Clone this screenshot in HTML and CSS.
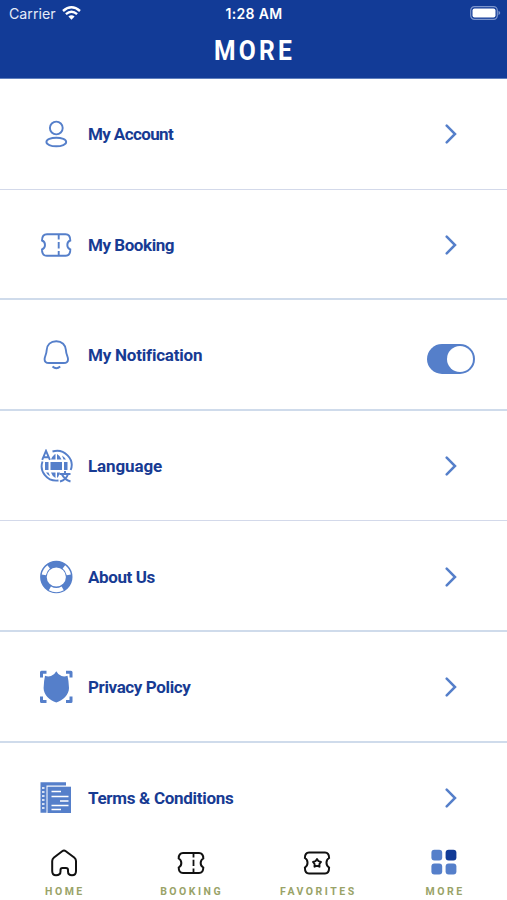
FILE: index.html
```html
<!DOCTYPE html>
<html lang="en">
<head>
<meta charset="utf-8">
<title>More</title>
<link rel="stylesheet" href="styles.css">
</head>
<body>
<div class="app">
  <header class="header">
    <div class="status">
      <div class="carrier"><span>Carrier</span>
        <svg width="19" height="14" viewBox="0 0 19 14" fill="none" stroke="#fff" stroke-width="2.4"><path d="M1 5Q9.500-2.500 18 5M3.900 8.100Q9.500 3.200 15.100 8.100"/><path d="M6.400 10.500Q9.500 7.800 12.600 10.500L9.500 13.700Z" fill="#fff" stroke="none"/></svg>
      </div>
      <time class="time">1:28 AM</time>
      <svg class="battery" width="31" height="14" viewBox="0 0 31 14"><rect x=".7" y=".7" width="26.600" height="12.600" rx="3.700" fill="none" stroke="#7c95cd" stroke-width="1.200"/><rect x="2.500" y="2.500" width="23" height="9" rx="2" fill="#fff"/><path d="M28.500 4.800Q32 7 28.500 9.200Z" fill="#7c95cd"/></svg>
    </div>
    <h1 class="title">MORE</h1>
  </header>
  <main class="list">
    <div class="row thin">
      <svg class="icon" viewBox="0 0 34 34" fill="none" stroke="#557fca" stroke-width="1.900"><circle cx="17.300" cy="11" r="6.400"/><ellipse cx="17.300" cy="25" rx="9.900" ry="4.300"/></svg>
      <span class="label account">My Account</span>
      <svg class="chevron" viewBox="0 0 12 20"><path d="M1.700 1.700L10 10 1.700 18.300"/></svg>
    </div>
    <div class="row">
      <svg class="icon" viewBox="0 0 34 34" fill="none" stroke="#557fca" stroke-width="1.900"><path d="M8 6.200H26.500Q31.300 6.200 31.300 12.500C27.300 14 27.300 20 31.300 21.500Q31.300 27.800 26.500 27.800H8Q3 27.800 3 21.500C7 20 7 14 3 12.500Q3 6.200 8 6.200Z"/><path d="M19.700 7V11.500M19.700 14V20.500M19.700 23V27.500"/></svg>
      <span class="label booking">My Booking</span>
      <svg class="chevron" viewBox="0 0 12 20"><path d="M1.700 1.700L10 10 1.700 18.300"/></svg>
    </div>
    <div class="row">
      <svg class="icon" viewBox="0 0 34 34" fill="none" stroke="#557fca" stroke-width="1.900"><path d="M17.300 3.200C11.500 3.200 8 7 7.700 12C7.400 17 5.600 18 5.600 21.500Q5.600 25 10 25H24.700Q29 25 29 21.500C29 18 27.200 17 26.900 12C26.600 7 23 3.200 17.300 3.200Z"/><path d="M13.500 28.500Q17.300 32 21.200 28.500"/></svg>
      <span class="label notification">My Notification</span>
      <span class="toggle" role="switch" aria-checked="true"></span>
    </div>
    <div class="row thin">
      <svg class="icon" viewBox="0 0 34 34" fill="none" stroke="#557fca" stroke-width="1.900"><path d="M13.500 2.500C25-1 36 10 31.700 21M3.500 12.500C0 22 8 33 19.500 31.500"/><path d="M3.200 10.800L7 1.800 10.900 10.800M4.500 8.300H9.500"/><g fill="#557fca" stroke="none"><path d="M15.500 5.500L16.500 5V10.500H12Q13.500 7 15.500 5.500ZM18 5Q21 6.500 22.500 10.500H18ZM12 23.500H16.500V29Q13 27 12 23.500ZM18 23.500H21L20 26Q19.500 28 18 29Z"/><path d="M6 13H9.500V21H6ZM11.500 13H23V21H11.500ZM25 13H28.500V21H25ZM7 23.500H9.500L11 27Q8.500 26 7 23.500ZM23 6.500Q25.500 8 27 10.500H24.500Z"/></g><path d="M20.500 25H31.500M26 22V24.700M28.800 25.500Q27.500 30.500 21 32.500M23 25.500Q25.500 30.500 31.500 32.500"/></svg>
      <span class="label language">Language</span>
      <svg class="chevron" viewBox="0 0 12 20"><path d="M1.700 1.700L10 10 1.700 18.300"/></svg>
    </div>
    <div class="row">
      <svg class="icon" viewBox="0 0 34 34" fill="none" stroke="#557fca"><circle cx="17.300" cy="17" r="12.900" stroke-width="6.600"/><path d="M23.700 28.400A12.900 12.900 0 0 1 10.900 28.400M4.800 14.800A12.900 12.900 0 0 1 9.700 6.800M29.800 14.800A12.900 12.900 0 0 0 24.900 6.800" stroke="#fff" stroke-width="4.200"/></svg>
      <span class="label about">About Us</span>
      <svg class="chevron" viewBox="0 0 12 20"><path d="M1.700 1.700L10 10 1.700 18.300"/></svg>
    </div>
    <div class="row">
      <svg class="icon" viewBox="0 0 34 34"><path d="M17.300 1.300Q19 4.800 22.500 6Q25.500 7 28.500 5.700Q29.800 11 30 18C30 25 24 30 17.300 32.500C10.500 30 4.600 25 4.600 18Q4.800 11 6 5.700Q9 7 12 6Q15.600 4.800 17.300 1.300Z" fill="#557fca"/><path d="M7.500 2.300H2.500V7.500M27 2.300H32V7.500M2.500 26.500V31.500H7.500M32 26.500V31.500H27" fill="none" stroke="#557fca" stroke-width="3" stroke-linejoin="round"/></svg>
      <span class="label privacy">Privacy Policy</span>
      <svg class="chevron" viewBox="0 0 12 20"><path d="M1.700 1.700L10 10 1.700 18.300"/></svg>
    </div>
    <div class="row">
      <svg class="icon" viewBox="0 0 34 34"><path d="M1.500 1.200H27V4.500H7.500V31.700H1.500Z" fill="#557fca"/><path d="M8.500 5.700H32V32H8.500Z" fill="#557fca"/><path d="M3 7H5.500M3 11H5.500M3 15H5.500M3 19H5.500M3 23H5.500M3 27H5.500" stroke="#fff" stroke-width="1.500"/><path d="M12.500 10.500H22M12.500 15.500H29.500M21 20H29.500M12.500 24.500H29.500M12.500 28.500H22" stroke="#fff" stroke-width="1.500"/></svg>
      <span class="label terms">Terms &amp; Conditions</span>
      <svg class="chevron" viewBox="0 0 12 20"><path d="M1.700 1.700L10 10 1.700 18.300"/></svg>
    </div>
  </main>
  <nav class="tabs">
    <div class="tab">
      <svg viewBox="0 0 28 28" fill="none" stroke="#111" stroke-width="2"><path d="M12.200 2.200Q14 .8 15.800 2.200L24.200 8.500Q26 10 26 12V22Q26 26.300 22 26.300Q18 26.300 18 22.500V21Q18 19 16 19H12.500Q10.500 19 10.500 21V22.500Q10.500 26.300 6 26.300Q2.200 26.300 2.200 22V12Q2.200 10 4 8.500Z"/></svg>
      <span class="tab-label">HOME</span>
    </div>
    <div class="tab">
      <svg viewBox="0 0 28 28" fill="none" stroke="#111" stroke-width="2"><path d="M6 4H22Q26.300 4 26.300 9.500C22.800 11.500 22.800 16.500 26.300 18.500Q26.300 24 22 24H6Q1.700 24 1.700 18.500C5.200 16.500 5.200 11.500 1.700 9.500Q1.700 4 6 4Z"/><path d="M16.500 5V8.500M16.500 10.800V17M16.500 19.500V23.500" stroke-width="1.800"/></svg>
      <span class="tab-label">BOOKING</span>
    </div>
    <div class="tab">
      <svg viewBox="0 0 28 28" fill="none" stroke="#111" stroke-width="2"><path d="M6 3.500H22Q26.100 3.500 26.100 9C22.600 11 22.600 16.500 26.100 18.500Q26.100 24.500 22 24.500H6Q1.900 24.500 1.900 18.500C5.400 16.500 5.400 11 1.900 9Q1.900 3.500 6 3.500Z"/><path d="M14 10L15.500 12.200 18 12.900 16.400 15 16.500 17.700 14 16.800 11.500 17.700 11.600 15 10 12.900 12.500 12.200Z" stroke-width="1.900" stroke-linejoin="round"/></svg>
      <span class="tab-label">FAVORITES</span>
    </div>
    <div class="tab">
      <svg class="grid-icon" viewBox="0 0 28 28" fill="#557fca"><rect x="1.400" y="1.700" width="10.800" height="10.800" rx="3"/><rect x="15.600" y="1.700" width="10.800" height="10.800" rx="3" fill="#123b97"/><rect x="1.400" y="15.600" width="10.800" height="10.800" rx="3"/><rect x="15.600" y="15.600" width="10.800" height="10.800" rx="3"/></svg>
      <span class="tab-label">MORE</span>
    </div>
  </nav>
</div>
</body>
</html>
```
FILE: styles.css
```css
* { box-sizing: border-box; }
body { margin: 0; background: #fff; font-family: Roboto, sans-serif; }
.app { width: 507px; height: 900px; display: flex; flex-direction: column; overflow: hidden; }
.header { height: 79px; flex: none; background: #123b97; color: #fff; border-bottom: 1px solid #5f7fbd; }
.status { height: 28px; display: grid; grid-template-columns: 1fr auto 1fr; align-items: center; padding: 0 8px 0 9px; font-family: Inter, sans-serif; font-size: 14.200px; }
.carrier { display: flex; align-items: center; gap: 6px; color: #e5ebf7; }
.carrier svg { margin-top: -3px; }
.carrier span, .time { margin-top: -1px; }
.time { font-weight: 600; font-size: 14px; letter-spacing: .35px; }
.battery { justify-self: end; margin: -2px -2px 0 0; }
.title { margin: 5.500px 0 0 2px; text-align: center; font-size: 28px; line-height: 34px; font-weight: 700; letter-spacing: 3.600px; transform: scaleX(.88); }
.list { flex: 1; min-height: 0; overflow: hidden; }
.row { height: 110.600px; display: flex; align-items: center; padding: 2px 32px 0 39px; border-bottom: 2px solid #cfdbeb; }
.row.thin { border-bottom: 1px solid #d3d9ea; padding-top: 1px; }
.icon { width: 34px; height: 34px; flex: none; }
.label { flex: 1; margin-left: 15px; color: #173b93; font-size: 17px; line-height: 24px; font-weight: 700; white-space: nowrap; }
.account { letter-spacing: -.600px; }
.booking { letter-spacing: -.450px; }
.notification { letter-spacing: -.210px; }
.language { letter-spacing: -.120px; }
.about { letter-spacing: -.400px; }
.privacy { letter-spacing: -.380px; }
.terms { letter-spacing: -.290px; }
.chevron { width: 12px; height: 20px; margin-right: 18px; fill: none; stroke: #557fca; stroke-width: 2.500; stroke-linecap: round; }
.toggle { width: 48px; height: 30px; border-radius: 15px; background: #557fca; padding: 2px; display: flex; justify-content: flex-end; margin-top: 8px; }
.toggle::after { content: ""; width: 26px; height: 26px; border-radius: 50%; background: #fff; }
.tabs { height: 75px; flex: none; display: flex; background: #fff; padding-top: 23.500px; }
.tab { flex: 1; display: flex; flex-direction: column; align-items: center; }
.tab svg { width: 28px; height: 28px; margin-left: 1px; }
.tab .grid-icon { margin: -.500px 0 .500px; }
.tab-label { margin-top: 8.500px; padding-left: 3px; font-size: 10.500px; line-height: 14px; font-weight: 700; color: #99a368; letter-spacing: 2.500px; }
```
